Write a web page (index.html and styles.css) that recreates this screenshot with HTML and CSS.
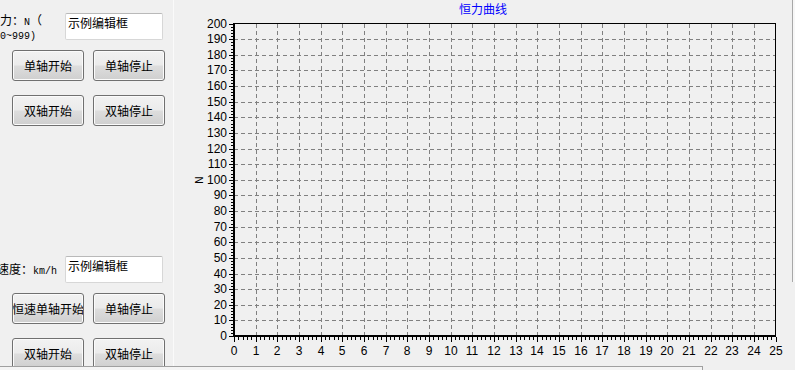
FILE: index.html
```html
<!DOCTYPE html>
<html>
	<head>
		<meta charset="utf-8">
		<title>恒力曲线</title>
		<link rel="stylesheet" href="styles.css">
		<script>
			var NS="http://www.w3.org/2000/svg";

			function add(tag,attrs,parent,text){
				var e=document.createElementNS(NS,tag);
				for(var k in attrs) e.setAttribute(k,attrs[k]);
				if(text!==undefined) e.textContent=text;
				parent.appendChild(e);
				return e;
			}

			function line(p,x1,y1,x2,y2,cls){
				return add("line",{x1:x1,y1:y1,x2:x2,y2:y2,"class":cls},p);
			}

			function drawPlot(){
				var svg=document.getElementById("plot");
				var X0=60,X1=601.5,Y0=316,Y1=3.5;
				var xs=(X1-X0)/25,ys=(Y0-Y1)/20;
				var i,x,y;

				// grid
				for(i=1;i<20;i++){
					y=Math.round(Y0-i*ys)+0.5;
					line(svg,X0,y,X1,y,"grid");
				}
				for(i=1;i<25;i++){
					x=Math.round(X0+i*xs)+0.5;
					line(svg,x,Y1,x,Y0,"grid");
				}

				// frame
				line(svg,X0,Y1,X1,Y1,"frame");
				line(svg,X1,Y1,X1,Y0,"frame");
				line(svg,X0,Y1-0.5,X0,Y0+1,"axis");
				line(svg,X0-1,Y0,X1+0.5,Y0,"axis");

				// y ticks
				for(i=0;i<=100;i++){
					y=Math.round(Y0-i*ys/5)+0.5;
					if(i%5==0){
						line(svg,55,y,59,y,"tick");
						add("text",{x:53,y:Math.round(Y0-i*ys/5)+4,"class":"ylab"},svg,String(i*2));
					}else{
						line(svg,57,y,59,y,"tick");
					}
				}

				// x ticks
				for(i=0;i<=125;i++){
					x=Math.round(X0+i*xs/5)+0.5;
					if(i%5==0){
						line(svg,x,317,x,322,"tick");
						add("text",{x:Math.round(X0+i*xs/5),y:335,"class":"xlab"},svg,String(i/5));
					}else{
						line(svg,x,317,x,320,"tick");
					}
				}

				add("text",{x:29,y:160,"class":"unit",transform:"rotate(-90 29 160)"},svg,"N");
			}

			window.addEventListener("load",drawPlot);
		</script>
	</head>
	<body>
		<div class="screen">
			<div class="side">
				<div class="group">
					<div class="field">
						<div class="label">力：<span class="mono">N</span>（<br><span class="mono">0~999)</span></div>
						<div class="edit">示例编辑框</div>
					</div>
					<div class="btns"><span class="btn">单轴开始</span><span class="btn">单轴停止</span></div>
					<div class="btns"><span class="btn">双轴开始</span><span class="btn">双轴停止</span></div>
				</div>
				<div class="group speed">
					<div class="field">
						<div class="label label-speed">速度：<span class="mono">km/h</span></div>
						<div class="edit">示例编辑框</div>
					</div>
					<div class="btns"><span class="btn">恒速单轴开始</span><span class="btn">单轴停止</span></div>
					<div class="btns"><span class="btn">双轴开始</span><span class="btn">双轴停止</span></div>
				</div>
			</div>
			<div class="chart">
				<div class="chart-title">恒力曲线</div>
				<svg id="plot" width="618" height="346"></svg>
			</div>
			<div class="vscroll"><div class="vscroll-edge"></div></div>
		</div>
		<div class="hscroll">
			<div class="hscroll-track"></div>
			<div class="hscroll-end"></div>
		</div>
	</body>
</html>
```

FILE: styles.css
```css
html,body{
	margin:0;
	padding:0;
}

body{
	background:#f0f0f0;
	color:#000;
	font-family:"Noto Sans CJK SC",sans-serif;
	font-size:12px;
	width:795px;
	height:370px;
	overflow:hidden;
}

.screen{
	display:flex;
	height:366px;
	overflow:hidden;
}

.side{
	width:173px;
	border-right:1px solid #fafafa;
	display:flex;
	flex-direction:column;
	overflow:hidden;
	flex:none;
}

.group{
	padding-top:13px;
}

.group.speed{
	padding-top:130px;
}

.field{
	display:flex;
	height:27px;
}

.label{
	width:65px;
	flex:none;
	line-height:12px;
	padding-top:1px;
	white-space:nowrap;
}

.label-speed{
	margin-left:-3px;
	width:68px;
	align-self:center;
	padding-top:0;
}

.mono{
	font-family:"Liberation Mono",monospace;
	font-size:10px;
	line-height:10px;
}

.edit{
	width:98px;
	box-sizing:border-box;
	background:#fff;
	border:1px solid #d7d7d7;
	border-top-color:#b9b9b9;
	border-radius:2px;
	padding:1px 0 0 2px;
	line-height:16px;
}

.btns{
	display:flex;
	gap:9px;
	padding-left:12px;
	margin-top:10px;
}

.btns+.btns{
	margin-top:14px;
}

.btn{
	width:72px;
	height:31px;
	box-sizing:border-box;
	border:1px solid #707070;
	border-radius:3px;
	background:linear-gradient(#f2f2f2 0%,#ebebeb 48%,#dddddd 52%,#cfcfcf 100%);
	box-shadow:inset 0 0 0 1px #fbfbfb;
	display:flex;
	align-items:center;
	justify-content:center;
	white-space:nowrap;
	overflow:hidden;
}

.chart{
	width:618px;
	flex:none;
}

.chart-title{
	height:20px;
	line-height:20px;
	text-align:center;
	color:#0000ff;
	margin-top:-1px;
}

#plot{
	display:block;
	margin-top:1px;
	overflow:visible;
}

#plot line{
	shape-rendering:crispEdges;
}

#plot .grid{
	stroke:#808080;
	stroke-width:1;
	stroke-dasharray:4 3;
}

#plot .frame{
	stroke:#000;
	stroke-width:1;
}

#plot .axis{
	stroke:#000;
	stroke-width:2;
}

#plot .tick{
	stroke:#000;
	stroke-width:1;
}

#plot text{
	font-family:"Liberation Sans",Arial,sans-serif;
	font-size:12px;
	fill:#000;
}

#plot .ylab{
	text-anchor:end;
}

#plot .xlab{
	text-anchor:middle;
}

#plot .unit{
	font-size:10px;
	text-anchor:middle;
}

.vscroll{
	flex:1;
}

.vscroll-edge{
	height:282px;
	border-left:1px solid #a8a8a8;
	background:#f7f7f7;
}

.hscroll{
	display:flex;
	height:4px;
}

.hscroll-track{
	width:702px;
	border-top:1px solid #a0a0a0;
	background:#f4f4f4;
}

.hscroll-end{
	flex:1;
	border-left:1px solid #a0a0a0;
	background:#f0f0f0;
}
```
